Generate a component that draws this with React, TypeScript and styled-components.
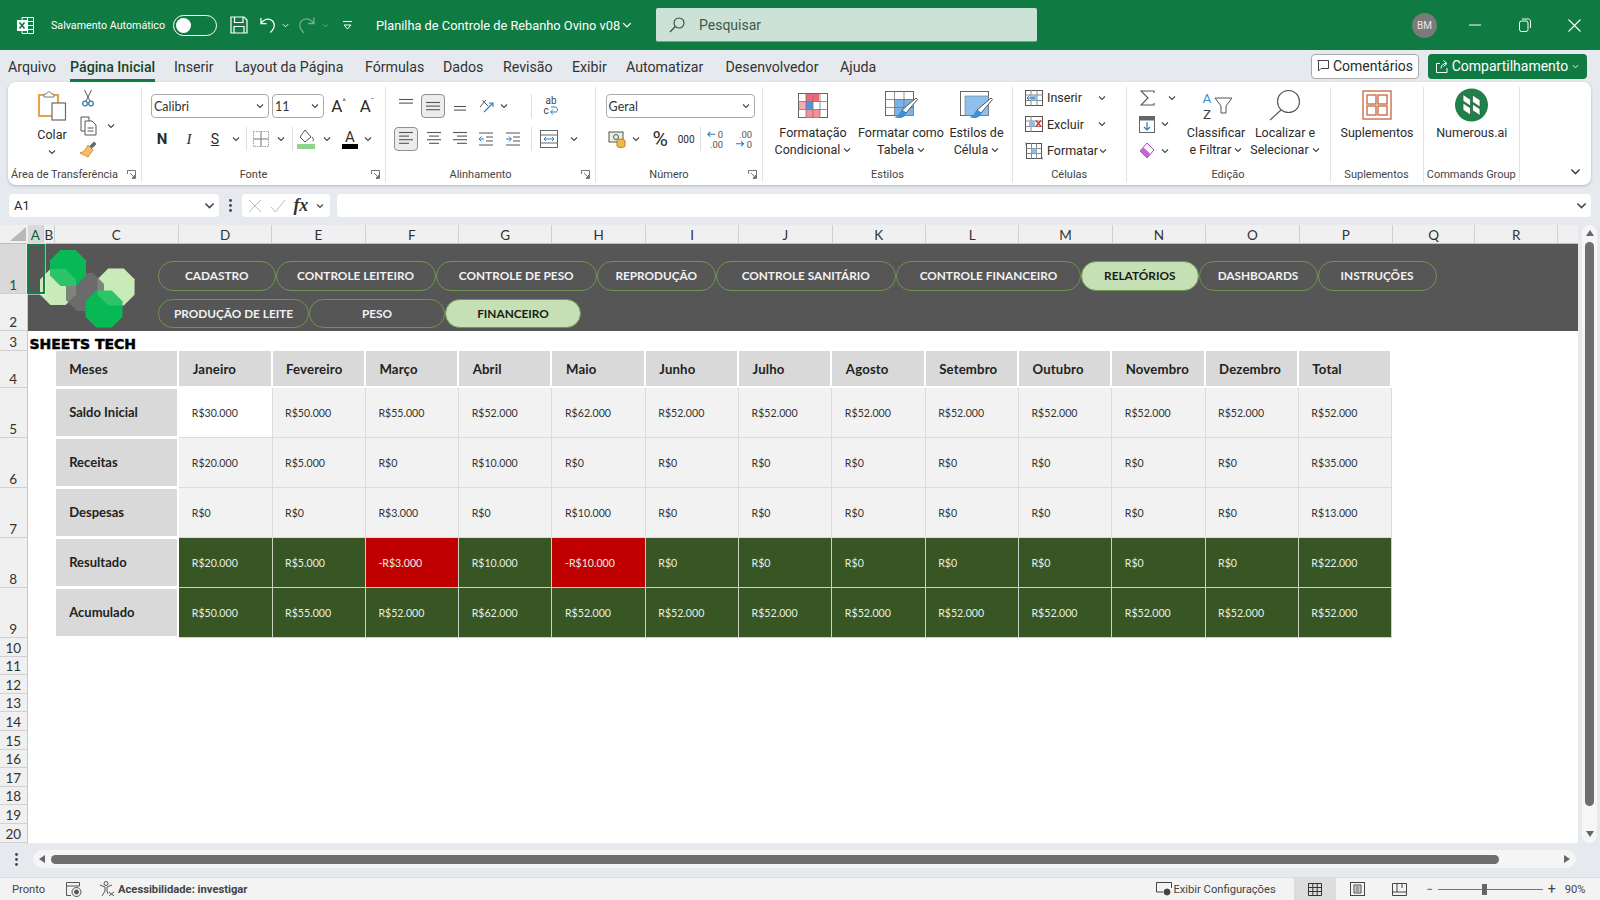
import React from 'react';
import styled, { createGlobalStyle } from 'styled-components';

const UI = `'Roboto', 'Liberation Sans', sans-serif`;
const CALIBRI = `'Lato', 'Liberation Sans', sans-serif`;

const Global = createGlobalStyle`
  html, body { margin: 0; padding: 0; background: #e6e9ed; overflow: hidden; }
  #root { width: 1600px; height: 900px; }
  * { box-sizing: border-box; }
`;

const Page = styled.div`
  width: 1600px;
  height: 900px;
  display: flex;
  flex-direction: column;
  background: #e6e9ed;
  font-family: ${UI};
  color: #2b2b2b;
  overflow: hidden;
`;

/* title bar */
const TitleBar = styled.div`
  height: 50px;
  flex: none;
  display: flex;
  align-items: center;
  background: #107a43;
  color: #fff;
`;

const Slot = styled.div<{ $w: number }>`
  width: ${(p) => p.$w}px;
  flex: none;
  display: flex;
  align-items: center;
  justify-content: center;
`;

const AutoSave = styled.div`
  width: 122px;
  flex: none;
  font-size: 10.7px;
  white-space: nowrap;
`;

const Toggle = styled.div`
  width: 44px;
  height: 21px;
  flex: none;
  border: 1.5px solid #fff;
  border-radius: 11px;
  display: flex;
  align-items: center;
  padding-left: 2px;
  &::before {
    content: '';
    width: 15px;
    height: 15px;
    border-radius: 50%;
    background: #fff;
  }
`;

const DocTitle = styled.div`
  margin-left: 14px;
  width: 240px;
  flex: none;
  font-size: 12.8px;
  white-space: nowrap;
`;

const SearchBox = styled.div`
  margin-left: 18px;
  width: 381px;
  height: 34px;
  flex: none;
  display: flex;
  align-items: center;
  gap: 14px;
  padding-left: 13px;
  background: #cde2d6;
  border-radius: 2px;
  border-bottom: 1px solid #7d9c8a;
  color: #3f5a4b;
  font-size: 14px;
`;

const Avatar = styled.div`
  margin-left: 375px;
  width: 25px;
  height: 25px;
  flex: none;
  border-radius: 50%;
  background: #7a7a7a;
  color: #e8e8e8;
  font-size: 10px;
  display: flex;
  align-items: center;
  justify-content: center;
`;

/* tabs */
const MenuRow = styled.div`
  height: 32px;
  flex: none;
  display: flex;
  align-items: center;
  padding-left: 8px;
`;

const Tab = styled.div<{ $w: number; $active?: boolean }>`
  width: ${(p) => p.$w}px;
  flex: none;
  height: 28px;
  margin-top: 3px;
  font-size: 14.2px;
  line-height: 26px;
  white-space: nowrap;
  position: relative;
  font-weight: ${(p) => (p.$active ? 500 : 400)};
  color: ${(p) => (p.$active ? '#14442a' : '#333')};
  &::after {
    content: '';
    display: ${(p) => (p.$active ? 'block' : 'none')};
    position: absolute;
    left: 0;
    width: 85px;
    bottom: 0;
    height: 2.5px;
    background: #107a43;
  }
`;

const CommentBtn = styled.div`
  margin-left: auto;
  width: 108px;
  height: 25px;
  flex: none;
  display: flex;
  align-items: center;
  justify-content: center;
  gap: 4px;
  background: #fff;
  border: 1px solid #a9a9a9;
  border-radius: 4px;
  font-size: 14px;
`;

const ShareBtn = styled.div`
  margin-left: 9px;
  margin-right: 13px;
  width: 159px;
  height: 25px;
  flex: none;
  display: flex;
  align-items: center;
  justify-content: center;
  gap: 4px;
  background: #107a43;
  border-radius: 4px;
  color: #fff;
  font-size: 14px;
`;

/* ribbon */
const Ribbon = styled.div`
  margin-left: 8px;
  width: 1583px;
  height: 103px;
  flex: none;
  display: flex;
  padding-top: 5px;
  background: #fff;
  border-radius: 8px;
  box-shadow: 0 1px 3px rgba(0, 0, 0, 0.22);
`;

const Group = styled.div<{ $w: number; $last?: boolean }>`
  width: ${(p) => p.$w}px;
  height: 95px;
  flex: none;
  display: flex;
  flex-direction: column;
  border-right: ${(p) => (p.$last ? 'none' : '1px solid #e2e2e2')};
`;

const GroupBody = styled.div<{ $pl?: number; $pt?: number; $row?: boolean }>`
  height: 80px;
  flex: none;
  display: flex;
  flex-direction: ${(p) => (p.$row ? 'row' : 'column')};
  padding-left: ${(p) => p.$pl ?? 0}px;
  padding-top: ${(p) => p.$pt ?? 0}px;
`;

const GroupLabel = styled.div`
  height: 15px;
  display: flex;
  align-items: center;
  font-size: 11px;
  color: #444;
`;

const LabelText = styled.div`
  flex: 1;
  text-align: center;
  white-space: nowrap;
`;

const Launcher = styled.div`
  width: 20px;
  flex: none;
  display: flex;
  justify-content: center;
`;

const ToolRow = styled.div<{ $h: number; $mt?: number }>`
  height: ${(p) => p.$h}px;
  margin-top: ${(p) => p.$mt ?? 0}px;
  flex: none;
  display: flex;
  align-items: center;
`;

const Tool = styled.div<{ $w: number; $fs?: number; $bold?: boolean; $italic?: boolean; $under?: boolean; $serif?: boolean }>`
  width: ${(p) => p.$w}px;
  flex: none;
  height: 24px;
  display: flex;
  align-items: center;
  justify-content: center;
  font-family: ${(p) => (p.$serif ? `'Liberation Serif', serif` : 'inherit')};
  font-size: ${(p) => p.$fs ?? 14}px;
  font-weight: ${(p) => (p.$bold ? 700 : 400)};
  font-style: ${(p) => (p.$italic ? 'italic' : 'normal')};
  text-decoration: ${(p) => (p.$under ? 'underline' : 'none')};
`;

const Caret = styled.span`
  font-size: 8px;
  align-self: flex-start;
  margin-top: 3px;
`;

const ToolSep = styled.div`
  width: 1px;
  height: 24px;
  flex: none;
  background: #dedede;
`;

const AlignBtn = styled.div<{ $active?: boolean; $ml?: number }>`
  width: 24px;
  height: 24px;
  flex: none;
  margin-left: ${(p) => p.$ml ?? 0}px;
  display: flex;
  align-items: center;
  justify-content: center;
  border-radius: 4px;
  background: ${(p) => (p.$active ? '#ececec' : 'transparent')};
  border: 1px solid ${(p) => (p.$active ? '#8f8f8f' : 'transparent')};
`;

const Select = styled.div<{ $w: number; $ml?: number }>`
  width: ${(p) => p.$w}px;
  height: 24px;
  flex: none;
  margin-left: ${(p) => p.$ml ?? 0}px;
  display: flex;
  align-items: center;
  justify-content: space-between;
  padding: 0 4px 0 2px;
  border: 1px solid #ababab;
  border-radius: 4px;
  font-family: ${CALIBRI};
  font-size: 12.5px;
  color: #333;
`;

const Column = styled.div<{ $w: number }>`
  width: ${(p) => p.$w}px;
  flex: none;
  display: flex;
  flex-direction: column;
`;

const PasteCol = styled.div`
  width: 44px;
  flex: none;
  display: flex;
  flex-direction: column;
  align-items: center;
  padding-top: 3px;
  font-size: 12.5px;
  line-height: 17px;
  gap: 5px;
`;

const BigTool = styled.div<{ $w: number }>`
  width: ${(p) => p.$w}px;
  flex: none;
  display: flex;
  flex-direction: column;
  align-items: center;
  font-size: 12.5px;
  line-height: 17px;
  text-align: center;
  white-space: nowrap;
`;

const BigIcon = styled.div`
  height: 36.5px;
  flex: none;
  display: flex;
  align-items: center;
`;

const CellText = styled.div<{ $w: number }>`
  width: ${(p) => p.$w}px;
  flex: none;
  font-size: 12.5px;
  white-space: nowrap;
`;

const Collapse = styled.div`
  flex: 1;
  display: flex;
  justify-content: flex-end;
  align-items: flex-end;
  padding: 0 10px 8px 0;
`;

/* formula bar */
const FormulaBar = styled.div`
  margin-top: 9px;
  height: 23px;
  flex: none;
  display: flex;
  align-items: center;
  padding-left: 9px;
`;

const NameBox = styled.div`
  width: 210px;
  height: 23px;
  flex: none;
  display: flex;
  align-items: center;
  justify-content: space-between;
  padding: 0 4px 0 5px;
  background: #fff;
  border-radius: 4px;
  font-size: 13px;
`;

const Dots = styled.div`
  width: 23px;
  flex: none;
  display: flex;
  justify-content: center;
`;

const FxBox = styled.div`
  width: 88px;
  height: 23px;
  flex: none;
  display: flex;
  align-items: center;
  justify-content: space-around;
  padding: 0 2px;
  background: #fff;
  border-radius: 4px;
`;

const FxText = styled.span`
  font-family: 'Liberation Serif', serif;
  font-style: italic;
  font-weight: 700;
  font-size: 18px;
  color: #333;
`;

const FormulaInput = styled.div`
  margin-left: 7px;
  width: 1254px;
  height: 23px;
  flex: none;
  display: flex;
  align-items: center;
  justify-content: flex-end;
  padding-right: 4px;
  background: #fff;
  border-radius: 4px;
`;

/* sheet */
const SheetArea = styled.div`
  margin-top: 8px;
  height: 618px;
  flex: none;
  display: flex;
`;

const Sheet = styled.div`
  width: 1578px;
  flex: none;
  display: flex;
  flex-direction: column;
  background: #fff;
`;

const ColHeaders = styled.div`
  height: 19px;
  flex: none;
  display: flex;
  background: #f0f0f0;
  border-bottom: 1px solid #bdbdbd;
`;

const Corner = styled.div`
  width: 27.5px;
  flex: none;
  display: flex;
  align-items: flex-end;
  justify-content: flex-end;
  padding: 0 2px 2px 0;
`;

const ColHeader = styled.div<{ $w: number; $selected?: boolean }>`
  width: ${(p) => p.$w}px;
  flex: none;
  display: flex;
  align-items: center;
  justify-content: center;
  padding-top: 2px;
  font-family: ${CALIBRI};
  font-size: 13.5px;
  color: ${(p) => (p.$selected ? '#0d5f33' : '#333')};
  background: ${(p) => (p.$selected ? '#d9d9d9' : 'transparent')};
  border-right: 1px solid #d0d0d0;
`;

const SheetBody = styled.div`
  flex: 1;
  display: flex;
  position: relative;
`;

const RowHeaders = styled.div`
  width: 27.5px;
  flex: none;
  display: flex;
  flex-direction: column;
  background: #f0f0f0;
  border-right: 1px solid #c8c8c8;
`;

const RowHeader = styled.div<{ $h: number; $selected?: boolean }>`
  height: ${(p) => p.$h}px;
  flex: none;
  display: flex;
  align-items: flex-end;
  justify-content: center;
  font-family: ${CALIBRI};
  font-size: 13.5px;
  line-height: 16px;
  color: ${(p) => (p.$selected ? '#0d5f33' : '#333')};
  background: ${(p) => (p.$selected ? '#d9d9d9' : 'transparent')};
  border-bottom: 1px solid #d0d0d0;
`;

const Canvas = styled.div`
  flex: 1;
  display: flex;
  flex-direction: column;
`;

const Band = styled.div`
  height: 87px;
  flex: none;
  display: flex;
  background: #565656;
  padding: 17px 0 0 130.5px;
  position: relative;
`;

const LogoMark = styled.svg`
  position: absolute;
  left: 10px;
  top: 1px;
`;

const PillRows = styled.div`
  display: flex;
  flex-direction: column;
  gap: 8px;
`;

const PillRow = styled.div`
  display: flex;
`;

const Pill = styled.div<{ $w: number; $active?: boolean }>`
  width: ${(p) => p.$w}px;
  height: 29.5px;
  flex: none;
  display: flex;
  align-items: center;
  justify-content: center;
  border-radius: 15px;
  border: 1px solid #6f9350;
  background: ${(p) => (p.$active ? '#c5e0b4' : 'transparent')};
  color: ${(p) => (p.$active ? '#1a1a1a' : '#f2f2f2')};
  font-family: ${CALIBRI};
  font-weight: 700;
  font-size: 11.8px;
  white-space: nowrap;
`;

const SheetTitle = styled.div`
  height: 20px;
  flex: none;
  padding-left: 2px;
  font-family: 'DejaVu Sans', sans-serif;
  font-weight: 700;
  font-size: 14px;
  line-height: 26px;
  color: #000;
  -webkit-text-stroke: 0.5px #000;
  white-space: nowrap;
`;

const Table = styled.div`
  margin-left: 28.2px;
  display: grid;
  grid-template-columns: 123.6px repeat(13, 93.3px);
  grid-template-rows: 36.7px repeat(5, 50px);
  width: max-content;
`;

const HeadCell = styled.div`
  display: flex;
  align-items: center;
  padding: 2px 0 0 13.5px;
  background: #d9d9d9;
  border: 1px solid #fff;
  border-width: 0 2px 2px 0;
  font-family: ${CALIBRI};
  font-weight: 700;
  font-size: 13.2px;
  letter-spacing: 0.15px;
  color: #222;
`;

const RowLabel = styled(HeadCell)`
  padding-top: 0;
  margin-top: 1px;
  font-size: 13px;
  letter-spacing: 0;
`;

type Tone = 'plain' | 'blank' | 'dark' | 'red';

const toneBg: Record<Tone, string> = {
  plain: '#f2f2f2',
  blank: '#ffffff',
  dark: '#375623',
  red: '#c00000',
};

const ValueCell = styled.div<{ $tone: Tone }>`
  display: flex;
  align-items: center;
  padding: 2px 0 0 12.5px;
  background: ${(p) => toneBg[p.$tone]};
  border-right: 1px solid ${(p) => (p.$tone === 'plain' || p.$tone === 'blank' ? '#dcdcdc' : '#c9d2c3')};
  border-bottom: 1px solid ${(p) => (p.$tone === 'plain' || p.$tone === 'blank' ? '#dcdcdc' : '#c9d2c3')};
  font-family: ${CALIBRI};
  font-size: 10.6px;
  color: ${(p) => (p.$tone === 'plain' || p.$tone === 'blank' ? '#333' : '#e9eee4')};
`;

const SelectionFrame = styled.div`
  position: absolute;
  left: 27px;
  top: 0;
  width: 18px;
  height: 50px;
  border: 2px solid #17804a;
  outline: 1px solid rgba(255, 255, 255, 0.5);
`;

const VScroll = styled.div`
  margin-left: 4px;
  width: 15px;
  height: 618px;
  flex: none;
  display: flex;
  flex-direction: column;
  align-items: center;
  background: #f6f6f6;
  border-radius: 8px;
  padding: 4px 0;
`;

const VThumb = styled.div`
  width: 9px;
  height: 566px;
  margin: 3px 0 23px;
  background: #6e6e6e;
  border-radius: 5px;
`;

/* scrollbar + status */
const HScrollRow = styled.div`
  margin-top: 7px;
  height: 18px;
  flex: none;
  display: flex;
  align-items: center;
`;

const SheetDots = styled.div`
  width: 33px;
  flex: none;
  display: flex;
  justify-content: center;
`;

const HTrack = styled.div`
  width: 1543px;
  height: 18px;
  flex: none;
  display: flex;
  align-items: center;
  padding-left: 5px;
  background: #f5f5f5;
  border-radius: 9px;
`;

const HThumb = styled.div`
  margin-left: 3px;
  width: 1448px;
  height: 9px;
  flex: none;
  background: #6e6e6e;
  border-radius: 5px;
`;

const ArrowGap = styled.div`
  margin-left: auto;
  padding-right: 3px;
  display: flex;
`;

const StatusBar = styled.div`
  margin-top: 9px;
  height: 23px;
  flex: none;
  display: flex;
  align-items: center;
  background: #f3f3f3;
  font-size: 11.2px;
  color: #444;
  border-top: 1px solid #dcdcdc;
`;

const StatusText = styled.div<{ $w?: number; $ml?: number; $bold?: boolean; $fs?: number }>`
  width: ${(p) => (p.$w ? `${p.$w}px` : 'auto')};
  margin-left: ${(p) => p.$ml ?? 0}px;
  flex: none;
  display: flex;
  font-size: ${(p) => p.$fs ?? 11.2}px;
  font-weight: ${(p) => (p.$bold ? 700 : 400)};
  white-space: nowrap;
`;

const ViewBtn = styled.div<{ $active?: boolean; $ml?: number }>`
  width: 42px;
  height: 22px;
  margin-left: ${(p) => p.$ml ?? 0}px;
  flex: none;
  display: flex;
  align-items: center;
  justify-content: center;
  background: ${(p) => (p.$active ? '#dcdcdc' : 'transparent')};
`;

const ZoomTrack = styled.div`
  margin-left: 5px;
  width: 105px;
  height: 1px;
  flex: none;
  position: relative;
  background: #777;
`;

const ZoomThumb = styled.div`
  position: absolute;
  left: 44px;
  top: -5px;
  width: 5px;
  height: 11px;
  background: #666;
`;

const NoShrinkSvg = styled.svg`
  flex: none;
`;

const MirroredSvg = styled.svg`
  transform: scaleX(-1);
`;

/* icons */
const Chev = ({ c = '#444', s = 8 }: { c?: string; s?: number }) => (
  <NoShrinkSvg width={s} height={s} viewBox="0 0 8 8">
    <path d="M1 2.5 4 5.5 7 2.5" fill="none" stroke={c} strokeWidth="1.1" />
  </NoShrinkSvg>
);

const Launch = () => (
  <svg width="9" height="9" viewBox="0 0 9 9">
    <path d="M.5 4V.5H8.5V8.5H5M3 3 7.5 7.5M7.5 5V7.5H5" fill="none" stroke="#666" strokeWidth=".9" />
  </svg>
);

const ExcelLogo = () => (
  <svg width="17" height="17" viewBox="0 0 17 17">
    <path d="M5 .5H16.5V16.5H5Z" fill="none" stroke="#fff" />
    <path d="M5 4.5H16.5M5 8.5H16.5M5 12.5H16.5M10.5.5V16.5" stroke="#fff" />
    <path d="M0 3H10V14H0Z" fill="#fff" />
    <path d="M2.5 5.5 7.5 11.5M7.5 5.5 2.5 11.5" stroke="#107a43" strokeWidth="1.6" />
  </svg>
);

const SaveIco = () => (
  <svg width="18" height="18" viewBox="0 0 18 18" fill="none" stroke="#fff" strokeWidth="1.2">
    <path d="M1 1H14L17 4V17H1Z" />
    <path d="M4.5 1V6.5H13V1M4 17V10.5H14V17" />
  </svg>
);

const UndoIco = () => (
  <svg width="17" height="18" viewBox="0 0 17 18" fill="none" stroke="#fff" strokeWidth="1.3">
    <path d="M1 1.5V7.5H7M1 7.5C4 3.5 8 2 11.5 3.5C16 6 17 11 11 17" />
  </svg>
);

const RedoIco = ({ c }: { c: string }) => (
  <MirroredSvg width="17" height="18" viewBox="0 0 17 18" fill="none" stroke={c} strokeWidth="1.3">
    <path d="M1 1.5V7.5H7M1 7.5C4 3.5 8 2 11.5 3.5C16 6 17 11 11 17" />
  </MirroredSvg>
);

const CustomizeIco = () => (
  <svg width="9" height="10" viewBox="0 0 9 10" fill="none" stroke="#fff">
    <path d="M0 1.5H9" />
    <path d="M1 5 4.5 9 8 5Z" />
  </svg>
);

const SearchIco = () => (
  <svg width="16" height="16" viewBox="0 0 16 16" fill="none" stroke="#2f4d3c" strokeWidth="1.1">
    <circle cx="10" cy="6" r="5" />
    <path d="M6.3 9.5 1 15" />
  </svg>
);

const MinIco = () => (
  <svg width="12" height="2" viewBox="0 0 12 2">
    <path d="M0 1H12" stroke="#fff" />
  </svg>
);

const RestoreIco = () => (
  <svg width="12" height="14" viewBox="0 0 12 14" fill="none" stroke="#fff">
    <rect x=".5" y="3" width="8.5" height="10.5" rx="2" />
    <path d="M3 1H9.5C10.5 1 11.5 2 11.5 3V10" />
  </svg>
);

const CloseIco = () => (
  <svg width="13" height="13" viewBox="0 0 13 13">
    <path d="M.5.5 12.5 12.5M12.5.5 .5 12.5" stroke="#fff" strokeWidth="1.1" />
  </svg>
);

const CommentIco = () => (
  <svg width="12" height="12" viewBox="0 0 12 12" fill="none" stroke="#444">
    <path d="M.5.5H11.5V8.5H4L1.5 11V.5" />
  </svg>
);

const ShareIco = () => (
  <svg width="12" height="13" viewBox="0 0 12 13" fill="none" stroke="#fff">
    <path d="M4 3.5H.5V12.5H11V8M5 8.5C5 5 7.5 3.5 10 3.5M7.5.5 11 3.5 7.5 6.5" />
  </svg>
);

const PasteIco = () => (
  <svg width="30" height="31" viewBox="0 0 30 31" fill="none">
    <path d="M7 5H2V26H21V5H16" stroke="#e2a653" strokeWidth="2.2" />
    <path d="M7 7V4H9.5C10 1 14 1 14.5 4H17V7Z" fill="#fff" stroke="#7a7a7a" />
    <rect x="15" y="13" width="13.5" height="17" fill="#fff" stroke="#6a6a6a" strokeWidth="1.2" />
  </svg>
);

const ScissorsIco = () => (
  <svg width="12" height="18" viewBox="0 0 12 18" fill="none" stroke="#555" strokeWidth="1">
    <path d="M2.5 1 8 12M9.5 1 4 12" />
    <circle cx="3" cy="14.5" r="2.3" stroke="#2f7fb0" strokeWidth="1.3" />
    <circle cx="9" cy="14.5" r="2.3" stroke="#2f7fb0" strokeWidth="1.3" />
  </svg>
);

const CopyIco = () => (
  <svg width="17" height="20" viewBox="0 0 17 20" fill="none" stroke="#555">
    <path d="M1 1H9V15H1Z" />
    <path d="M5 5H12L16 9V19H5Z" fill="#fff" />
    <path d="M7.5 12H13.5M7.5 15H13.5" />
  </svg>
);

const BrushIco = () => (
  <svg width="18" height="18" viewBox="0 0 18 18">
    <path d="M9 4 14 9 9 16 1 12C5 11 7 8 9 4Z" fill="#f4bd6b" stroke="#d8913a" />
    <path d="M10.5 5 15 .5 17.5 3 13 7.5Z" fill="#666" />
  </svg>
);

const BordersIco = () => (
  <svg width="16" height="16" viewBox="0 0 16 16" fill="none">
    <path d="M.5.5H15.5V15.5H.5Z" stroke="#9a9a9a" strokeDasharray="1.5 1" />
    <path d="M8 .5V15.5M.5 8H15.5" stroke="#777" />
  </svg>
);

const FillIco = () => (
  <svg width="18" height="20" viewBox="0 0 18 20">
    <path d="M8 1 14 8 8 13 3 8Z" fill="#fff" stroke="#555" />
    <path d="M15 8C16.5 10 17 11 15.5 12" stroke="#555" fill="none" />
    <rect x="0" y="15" width="18" height="5" fill="#8fd28f" />
  </svg>
);

const FontColorIco = () => (
  <svg width="18" height="22" viewBox="0 0 18 22">
    <text x="9" y="14" textAnchor="middle" fontFamily="Roboto, sans-serif" fontSize="15" fill="#333">A</text>
    <rect x="1" y="16" width="16" height="5" fill="#000" />
  </svg>
);

const Lines = ({ rows, top = 0 }: { rows: [number, number][]; top?: number }) => (
  <svg width="16" height="16" viewBox="0 0 16 16" stroke="#555" strokeWidth="1.1">
    {rows.map(([x1, x2], i) => (
      <path key={i} d={`M${x1} ${top + 1.5 + i * 3.6}H${x2}`} />
    ))}
  </svg>
);

const Indent = ({ flip }: { flip?: boolean }) => (
  <svg width="16" height="14" viewBox="0 0 16 14" fill="none">
    <path d="M1 1H15M8 5H15M8 9H15M1 13H15" stroke="#555" />
    <path d={flip ? 'M1 7H6M4 4.5 6.5 7 4 9.5' : 'M6 7H1M3.5 4.5 1 7 3.5 9.5'} stroke="#2f7cc0" />
  </svg>
);

const OrientIco = () => (
  <svg width="16" height="16" viewBox="0 0 16 16" fill="none">
    <path d="M2 9 8 2M4.5 2.5 10 8" stroke="#555" />
    <path d="M6 14 15 5M11 5H15V9" stroke="#2f7cc0" strokeWidth="1.1" />
  </svg>
);

const WrapIco = () => (
  <svg width="16" height="20" viewBox="0 0 16 20">
    <text x="8" y="8" textAnchor="middle" fontFamily="Roboto, sans-serif" fontSize="10" fill="#444">ab</text>
    <text x="3" y="18" textAnchor="middle" fontFamily="Roboto, sans-serif" fontSize="10" fill="#444">c</text>
    <path d="M8 16H13C15 16 15 11 12 11H8M10 13.5 7.5 16 10 18.5" fill="none" stroke="#2f7cc0" />
  </svg>
);

const MergeIco = () => (
  <svg width="18" height="18" viewBox="0 0 18 18" fill="none">
    <rect x=".5" y=".5" width="17" height="17" stroke="#666" />
    <path d="M.5 5H17.5M.5 13H17.5" stroke="#666" />
    <path d="M4 9H14M6 7 4 9 6 11M12 7 14 9 12 11" stroke="#2f7cc0" />
  </svg>
);

const CurrencyIco = () => (
  <svg width="18" height="18" viewBox="0 0 18 18">
    <rect x="1" y="2" width="14" height="10" fill="#e8f1e0" stroke="#555" />
    <circle cx="8" cy="7" r="2.5" fill="none" stroke="#555" />
    <ellipse cx="13" cy="11" rx="4" ry="2" fill="#f3b84a" stroke="#b87f1e" />
    <path d="M9 11V16C9 18 17 18 17 16V11" fill="#f3b84a" stroke="#b87f1e" />
  </svg>
);

const DecimalIco = ({ more }: { more?: boolean }) => (
  <svg width="18" height="21" viewBox="0 0 18 21">
    <text x="18" y="9" textAnchor="end" fontFamily="Roboto, sans-serif" fontSize="10" fill="#555">{more ? '.00' : '0'}</text>
    <text x="18" y="19" textAnchor="end" fontFamily="Roboto, sans-serif" fontSize="10" fill="#555">{more ? '0' : '.00'}</text>
    <path d={more ? 'M1 15H9M6.5 12.5 9 15 6.5 17.5' : 'M10 5H2M4.5 2.5 2 5 4.5 7.5'} fill="none" stroke="#2f7cc0" strokeWidth="1.2" />
  </svg>
);

const CondFormatIco = () => (
  <svg width="30" height="25" viewBox="0 0 30 25">
    <rect x=".5" y=".5" width="29" height="24" fill="#fff" stroke="#666" />
    <rect x="8" y="1" width="13" height="7.5" fill="#ee6a74" />
    <rect x="1" y="8.5" width="7" height="8" fill="#f7aab0" />
    <rect x="8" y="8.5" width="7" height="8" fill="#4f97dc" />
    <rect x="8" y="16.5" width="14" height="8" fill="#f58f98" />
    <path d="M8 0V25M15 0V25M22 0V25M0 8.5H30M0 16.5H30" stroke="#777" strokeWidth=".8" />
  </svg>
);

const TableBrushIco = () => (
  <svg width="33" height="28" viewBox="0 0 33 28">
    <rect x=".5" y=".5" width="28" height="24" fill="#fff" stroke="#666" />
    <rect x="9.5" y="8" width="19" height="16.5" fill="#7ab3e8" />
    <path d="M9.5 0V25M19 0V25M0 8.5H29M0 16.5H29" stroke="#777" strokeWidth=".8" />
    <path d="M31 7 32.5 8.5 21 22 17 19Z" fill="#fff" stroke="#555" />
    <path d="M17 19C14 21 15 25 9 26C14 28 21 27 21 22Z" fill="#3f8fd8" />
  </svg>
);

const StyleBrushIco = () => (
  <svg width="33" height="28" viewBox="0 0 33 28">
    <rect x=".5" y=".5" width="28" height="24" fill="#fff" stroke="#666" />
    <rect x="5" y="5" width="23.5" height="19.5" fill="#8ec0ee" stroke="#777" strokeWidth=".6" />
    <path d="M31 7 32.5 8.5 21 22 17 19Z" fill="#fff" stroke="#555" />
    <path d="M17 19C14 21 15 25 9 26C14 28 21 27 21 22Z" fill="#3f8fd8" />
  </svg>
);

const CellInsertIco = () => (
  <svg width="18" height="16" viewBox="0 0 18 16" fill="none">
    <rect x=".5" y=".5" width="17" height="15" stroke="#555" />
    <path d="M.5 5H17.5M.5 10.5H17.5M6 0V16M12 0V16" stroke="#888" />
    <rect x="6" y="5" width="6" height="5.5" fill="#8ec0ee" />
    <path d="M10 8H2M4.5 5.5 2 8 4.5 10.5" stroke="#2f7cc0" />
  </svg>
);

const CellDeleteIco = () => (
  <svg width="18" height="16" viewBox="0 0 18 16" fill="none">
    <rect x=".5" y=".5" width="17" height="15" stroke="#555" />
    <path d="M.5 5H17.5M.5 10.5H17.5M6 0V16" stroke="#888" />
    <rect x="4" y="5" width="6" height="5.5" fill="#8ec0ee" />
    <path d="M11 4.5 16 10.5M16 4.5 11 10.5" stroke="#d9342b" strokeWidth="1.4" />
  </svg>
);

const CellFormatIco = () => (
  <svg width="18" height="18" viewBox="0 0 18 18" fill="none">
    <rect x="1.5" y="1.5" width="15" height="15" stroke="#555" />
    <path d="M1.5 6.5H16.5M1.5 11.5H16.5M6.5 1V17M11.5 1V17" stroke="#888" />
    <rect x="6.5" y="6.5" width="5" height="5" fill="#8ec0ee" />
    <path d="M0 0V3M18 15V18" stroke="#2f7cc0" />
  </svg>
);

const SigmaIco = () => (
  <svg width="15" height="16" viewBox="0 0 15 16" fill="none" stroke="#555" strokeWidth="1.1">
    <path d="M14 3V1H1L8 8 1 15H14V13" />
  </svg>
);

const FillDownIco = () => (
  <svg width="16" height="17" viewBox="0 0 16 17" fill="none">
    <rect x=".5" y=".5" width="15" height="16" stroke="#666" />
    <rect x=".5" y=".5" width="15" height="4" fill="#666" />
    <path d="M8 6V14M5 11 8 14 11 11" stroke="#2f7cc0" strokeWidth="1.2" />
  </svg>
);

const EraserIco = () => (
  <svg width="16" height="17" viewBox="0 0 16 17">
    <path d="M8 1 15 8 8 16 1 9Z" fill="#fff" stroke="#a94ac0" />
    <path d="M4.5 5.5 1 9 8 16 11.5 12Z" fill="#c565d8" />
  </svg>
);

const SortIco = () => (
  <svg width="32" height="32" viewBox="0 0 32 32">
    <text x="7" y="13.5" textAnchor="middle" fontFamily="Roboto, sans-serif" fontSize="13.5" fill="#3f8fd8">A</text>
    <text x="7" y="29.5" textAnchor="middle" fontFamily="Roboto, sans-serif" fontSize="13.5" fill="#444">Z</text>
    <path d="M15 9H32L26 17V24H21V17Z" fill="none" stroke="#555" />
  </svg>
);

const FindIco = () => (
  <svg width="32" height="32" viewBox="0 0 32 32" fill="none" stroke="#555" strokeWidth="1.1">
    <circle cx="19.5" cy="12.5" r="11" />
    <path d="M12 21 1 31" />
  </svg>
);

const AddinIco = () => (
  <svg width="30" height="30" viewBox="0 0 30 30" fill="none" stroke="#c8704d" strokeWidth="1.4">
    <rect x="1" y="1" width="28" height="28" />
    <rect x="5" y="5" width="9" height="9" />
    <rect x="16" y="5" width="9" height="9" />
    <rect x="5" y="16" width="9" height="9" />
    <rect x="16" y="16" width="9" height="9" />
  </svg>
);

const NumerousIco = () => (
  <svg width="33" height="34" viewBox="0 0 33 34">
    <circle cx="16.5" cy="17" r="16.5" fill="#1f8049" />
    <path d="M8 6.5 15.5 11.5V18L8 13ZM8 15 15.5 20V27L8 22ZM17.5 7 25 12V19L17.5 14ZM17.5 16 25 21V27.5L17.5 22.5Z" fill="#fff" stroke="#1f5c38" strokeWidth=".7" />
  </svg>
);

const DotsIco = () => (
  <svg width="3" height="13" viewBox="0 0 3 13" fill="#444">
    <circle cx="1.5" cy="1.5" r="1.4" />
    <circle cx="1.5" cy="6.5" r="1.4" />
    <circle cx="1.5" cy="11.5" r="1.4" />
  </svg>
);

const Tri = ({ dir }: { dir: 'left' | 'right' | 'up' | 'down' }) => {
  const d = {
    left: 'M7 1V9L1 5Z',
    right: 'M1 1V9L7 5Z',
    up: 'M1 7H9L5 1Z',
    down: 'M1 2H9L5 8Z',
  }[dir];
  return (
    <NoShrinkSvg width="10" height="10" viewBox="0 0 10 10" fill="#666">
      <path d={d} />
    </NoShrinkSvg>
  );
};

const CloseIcoGrey = () => (
  <svg width="14" height="14" viewBox="0 0 14 14">
    <path d="M1 1 13 13M13 1 1 13" stroke="#bdbdbd" />
  </svg>
);

const CheckIcoGrey = () => (
  <svg width="16" height="14" viewBox="0 0 16 14" fill="none">
    <path d="M1 8 5.5 13 15 1" stroke="#bdbdbd" />
  </svg>
);

const MacroIco = () => (
  <svg width="16" height="15" viewBox="0 0 16 15" fill="none" stroke="#555">
    <path d="M.5.5H13.5V4H.5ZM.5 4V13.5H5" />
    <circle cx="10.5" cy="10" r="4.5" />
    <circle cx="10.5" cy="10" r="2" fill="#555" />
  </svg>
);

const AccessIco = () => (
  <svg width="16" height="16" viewBox="0 0 16 16" fill="none" stroke="#555">
    <circle cx="7" cy="2.5" r="2" />
    <path d="M1 4 6 6V10L3 15M13 4 8 6V10L9 13M10 11 15 15M15 11 10 15" />
  </svg>
);

const DisplayIco = () => (
  <svg width="16" height="14" viewBox="0 0 16 14" fill="none" stroke="#444">
    <path d="M7 10H.5V.5H15.5V6" />
    <circle cx="11" cy="10" r="3" fill="#444" />
  </svg>
);

const GridViewIco = () => (
  <svg width="14" height="13" viewBox="0 0 14 13" fill="none" stroke="#333">
    <path d="M.5.5H13.5V12.5H.5ZM.5 4.5H13.5M.5 8.5H13.5M4.8.5V12.5M9.2.5V12.5" />
  </svg>
);

const PageViewIco = () => (
  <svg width="15" height="14" viewBox="0 0 15 14" fill="none" stroke="#444">
    <rect x=".5" y=".5" width="14" height="13" />
    <path d="M4 3H11V11H4ZM5.5 5H9.5M5.5 7H9.5M5.5 9H9.5" />
  </svg>
);

const BreakViewIco = () => (
  <svg width="15" height="13" viewBox="0 0 15 13" fill="none" stroke="#444">
    <path d="M.5 12.5V.5H14.5V12.5ZM.5 9H14.5M5 .5V9M10 .5V5" />
  </svg>
);

const octagon = (cx: number, cy: number, r: number) => {
  const k = r * 0.42;
  return `${cx - k},${cy - r} ${cx + k},${cy - r} ${cx + r},${cy - k} ${cx + r},${cy + k} ${cx + k},${cy + r} ${cx - k},${cy + r} ${cx - r},${cy + k} ${cx - r},${cy - k}`;
};

const Logo = () => (
  <LogoMark width="100" height="86" viewBox="0 0 100 86">
    <polygon points={octagon(20, 42, 18)} fill="#c9ecb8" />
    <polygon points={octagon(78, 42, 18.5)} fill="#c9ecb8" />
    <polygon points={octagon(47, 47, 19)} fill="#6b6b6b" />
    <polygon points={octagon(30, 23, 18)} fill="#07b955" />
    <polygon points={octagon(66, 64, 18.5)} fill="#07b955" />
    <polygon points={octagon(20, 42, 18)} fill="#c9ecb8" opacity="0.2" />
    <polygon points={octagon(78, 42, 18.5)} fill="#c9ecb8" opacity="0.2" />
  </LogoMark>
);

/* data */
const cols = ['D', 'E', 'F', 'G', 'H', 'I', 'J', 'K', 'L', 'M', 'N', 'O', 'P'];
const rowHeights = [50, 37, 20, 36.7, 50.3, 50, 50, 50, 50, ...Array(11).fill(18.6)];
const months = ['Janeiro', 'Fevereiro', 'Março', 'Abril', 'Maio', 'Junho', 'Julho', 'Agosto', 'Setembro', 'Outubro', 'Novembro', 'Dezembro', 'Total'];

const pillsTop: [string, number, boolean?][] = [
  ['CADASTRO', 117.5],
  ['CONTROLE LEITEIRO', 160],
  ['CONTROLE DE PESO', 161.5],
  ['REPRODUÇÃO', 118.5],
  ['CONTROLE SANITÁRIO', 180.5],
  ['CONTROLE FINANCEIRO', 185],
  ['RELATÓRIOS', 117.5, true],
  ['DASHBOARDS', 119],
  ['INSTRUÇÕES', 119],
];

const pillsBottom: [string, number, boolean?][] = [
  ['PRODUÇÃO DE LEITE', 151],
  ['PESO', 136],
  ['FINANCEIRO', 136, true],
];

const zeros = (total: string) => ['R$0', 'R$0', 'R$0', 'R$0', 'R$0', 'R$0', 'R$0', 'R$0', total];

const tableRows: { label: string; tone: Tone; values: string[] }[] = [
  { label: 'Saldo Inicial', tone: 'plain', values: ['R$30.000', 'R$50.000', 'R$55.000', 'R$52.000', 'R$62.000', 'R$52.000', 'R$52.000', 'R$52.000', 'R$52.000', 'R$52.000', 'R$52.000', 'R$52.000', 'R$52.000'] },
  { label: 'Receitas', tone: 'plain', values: ['R$20.000', 'R$5.000', 'R$0', 'R$10.000', ...zeros('R$35.000')] },
  { label: 'Despesas', tone: 'plain', values: ['R$0', 'R$0', 'R$3.000', 'R$0', 'R$10.000', 'R$0', 'R$0', 'R$0', 'R$0', 'R$0', 'R$0', 'R$0', 'R$13.000'] },
  { label: 'Resultado', tone: 'dark', values: ['R$20.000', 'R$5.000', '-R$3.000', 'R$10.000', '-R$10.000', 'R$0', 'R$0', 'R$0', 'R$0', 'R$0', 'R$0', 'R$0', 'R$22.000'] },
  { label: 'Acumulado', tone: 'dark', values: ['R$50.000', 'R$55.000', 'R$52.000', 'R$62.000', 'R$52.000', 'R$52.000', 'R$52.000', 'R$52.000', 'R$52.000', 'R$52.000', 'R$52.000', 'R$52.000', 'R$52.000'] },
];

const cellTone = (base: Tone, value: string, isFirstCell: boolean): Tone => {
  if (value.startsWith('-')) return 'red';
  if (isFirstCell) return 'blank';
  return base;
};

const GroupTitle = ({ text, launcher }: { text: string; launcher?: boolean }) => (
  <GroupLabel>
    <LabelText>{text}</LabelText>
    {launcher && (
      <Launcher>
        <Launch />
      </Launcher>
    )}
  </GroupLabel>
);

export default function App() {
  return (
    <Page>
      <Global />
      <TitleBar>
        <Slot $w={51}>
          <ExcelLogo />
        </Slot>
        <AutoSave>Salvamento Automático</AutoSave>
        <Toggle />
        <Slot $w={43}>
          <SaveIco />
        </Slot>
        <Slot $w={16}>
          <UndoIco />
        </Slot>
        <Slot $w={18}>
          <Chev c="#fff" s={7} />
        </Slot>
        <Slot $w={24}>
          <RedoIco c="#6fb18d" />
        </Slot>
        <Slot $w={14}>
          <Chev c="#6fb18d" s={7} />
        </Slot>
        <Slot $w={30}>
          <CustomizeIco />
        </Slot>
        <DocTitle>Planilha de Controle de Rebanho Ovino v08</DocTitle>
        <Slot $w={22}>
          <Chev c="#fff" s={10} />
        </Slot>
        <SearchBox>
          <SearchIco />
          Pesquisar
        </SearchBox>
        <Avatar>BM</Avatar>
        <Slot $w={75}>
          <MinIco />
        </Slot>
        <Slot $w={25}>
          <RestoreIco />
        </Slot>
        <Slot $w={75}>
          <CloseIco />
        </Slot>
      </TitleBar>

      <MenuRow>
        <Tab $w={62}>Arquivo</Tab>
        <Tab $w={104} $active>Página Inicial</Tab>
        <Tab $w={60.7}>Inserir</Tab>
        <Tab $w={130.3}>Layout da Página</Tab>
        <Tab $w={78}>Fórmulas</Tab>
        <Tab $w={60}>Dados</Tab>
        <Tab $w={69}>Revisão</Tab>
        <Tab $w={54}>Exibir</Tab>
        <Tab $w={99.5}>Automatizar</Tab>
        <Tab $w={114.5}>Desenvolvedor</Tab>
        <Tab $w={40}>Ajuda</Tab>
        <CommentBtn>
          <CommentIco />
          Comentários
        </CommentBtn>
        <ShareBtn>
          <ShareIco />
          Compartilhamento
          <Chev c="#fff" s={7} />
        </ShareBtn>
      </MenuRow>

      <Ribbon>
        <Group $w={134}>
          <GroupBody $row $pl={22}>
            <PasteCol>
              <PasteIco />
              Colar
              <Chev />
            </PasteCol>
            <Column $w={60}>
              <ToolRow $h={22}>
                <Tool $w={28}><ScissorsIco /></Tool>
              </ToolRow>
              <ToolRow $h={34}>
                <Tool $w={28}><CopyIco /></Tool>
                <Tool $w={18}><Chev /></Tool>
              </ToolRow>
              <ToolRow $h={14}>
                <Tool $w={28}><BrushIco /></Tool>
              </ToolRow>
            </Column>
          </GroupBody>
          <GroupTitle text="Área de Transferência" launcher />
        </Group>

        <Group $w={244}>
          <GroupBody $pl={9} $pt={7}>
            <ToolRow $h={24}>
              <Select $w={118}>Calibri<Chev /></Select>
              <Select $w={52} $ml={3}>11<Chev /></Select>
              <Tool $w={29} $fs={17}>A<Caret>^</Caret></Tool>
              <Tool $w={28} $fs={17}>A<Caret>ˇ</Caret></Tool>
            </ToolRow>
            <ToolRow $h={24} $mt={9}>
              <Tool $w={22} $bold $fs={15}>N</Tool>
              <Tool $w={32} $italic $serif $fs={15}>I</Tool>
              <Tool $w={20} $under>S</Tool>
              <Tool $w={21}><Chev /></Tool>
              <ToolSep />
              <Tool $w={27}><BordersIco /></Tool>
              <Tool $w={14}><Chev /></Tool>
              <Tool $w={8}><ToolSep /></Tool>
              <Tool $w={20}><FillIco /></Tool>
              <Tool $w={21}><Chev /></Tool>
              <Tool $w={25}><FontColorIco /></Tool>
              <Tool $w={12}><Chev /></Tool>
            </ToolRow>
          </GroupBody>
          <GroupTitle text="Fonte" launcher />
        </Group>

        <Group $w={210}>
          <GroupBody $pl={8} $pt={7}>
            <ToolRow $h={24}>
              <AlignBtn><Lines rows={[[1, 15], [1, 15]]} /></AlignBtn>
              <AlignBtn $active $ml={3}><Lines rows={[[1, 15], [1, 15], [1, 15]]} top={3} /></AlignBtn>
              <Tool $w={30}><Lines rows={[[2, 14], [2, 14]]} top={7} /></Tool>
              <Tool $w={22}><OrientIco /></Tool>
              <Tool $w={14}><Chev /></Tool>
              <Tool $w={20} />
              <ToolSep />
              <Tool $w={38}><WrapIco /></Tool>
            </ToolRow>
            <ToolRow $h={24} $mt={9}>
              <AlignBtn $active><Lines rows={[[1, 15], [1, 11], [1, 15], [1, 11]]} /></AlignBtn>
              <Tool $w={32}><Lines rows={[[1, 15], [3, 13], [1, 15], [3, 13]]} /></Tool>
              <Tool $w={20}><Lines rows={[[1, 15], [5, 15], [1, 15], [5, 15]]} /></Tool>
              <Tool $w={32}><Indent /></Tool>
              <Tool $w={22}><Indent flip /></Tool>
              <Tool $w={7} />
              <ToolSep />
              <Tool $w={34}><MergeIco /></Tool>
              <Tool $w={16}><Chev /></Tool>
            </ToolRow>
          </GroupBody>
          <GroupTitle text="Alinhamento" launcher />
        </Group>

        <Group $w={167}>
          <GroupBody $pl={9.6} $pt={7}>
            <ToolRow $h={24}>
              <Select $w={149}>Geral<Chev /></Select>
            </ToolRow>
            <ToolRow $h={24} $mt={9}>
              <Tool $w={23}><CurrencyIco /></Tool>
              <Tool $w={15}><Chev /></Tool>
              <Tool $w={33} $fs={21}>%</Tool>
              <Tool $w={19} $fs={10}>000</Tool>
              <Tool $w={10}><ToolSep /></Tool>
              <Tool $w={17}><DecimalIco /></Tool>
              <Tool $w={12} />
              <Tool $w={17}><DecimalIco more /></Tool>
            </ToolRow>
          </GroupBody>
          <GroupTitle text="Número" launcher />
        </Group>

        <Group $w={250}>
          <GroupBody $row>
            <BigTool $w={100}>
              <BigIcon><CondFormatIco /></BigIcon>
              Formatação
              <span>Condicional <Chev /></span>
            </BigTool>
            <BigTool $w={76}>
              <BigIcon><TableBrushIco /></BigIcon>
              Formatar como
              <span>Tabela <Chev /></span>
            </BigTool>
            <BigTool $w={75}>
              <BigIcon><StyleBrushIco /></BigIcon>
              Estilos de
              <span>Célula <Chev /></span>
            </BigTool>
          </GroupBody>
          <GroupTitle text="Estilos" />
        </Group>

        <Group $w={113.5}>
          <GroupBody $pl={12}>
            <ToolRow $h={21}>
              <Tool $w={18}><CellInsertIco /></Tool>
              <Tool $w={4} />
              <CellText $w={48}>Inserir</CellText>
              <Tool $w={14}><Chev /></Tool>
            </ToolRow>
            <ToolRow $h={32}>
              <Tool $w={18}><CellDeleteIco /></Tool>
              <Tool $w={4} />
              <CellText $w={48}>Excluir</CellText>
              <Tool $w={14}><Chev /></Tool>
            </ToolRow>
            <ToolRow $h={21}>
              <Tool $w={18}><CellFormatIco /></Tool>
              <Tool $w={4} />
              <CellText $w={49}>Formatar</CellText>
              <Tool $w={14}><Chev /></Tool>
            </ToolRow>
          </GroupBody>
          <GroupTitle text="Células" />
        </Group>

        <Group $w={204}>
          <GroupBody $row $pl={10}>
            <Column $w={50}>
              <ToolRow $h={21}>
                <Tool $w={21}><SigmaIco /></Tool>
                <Tool $w={29}><Chev /></Tool>
              </ToolRow>
              <ToolRow $h={32}>
                <Tool $w={21}><FillDownIco /></Tool>
                <Tool $w={15}><Chev /></Tool>
              </ToolRow>
              <ToolRow $h={21}>
                <Tool $w={21}><EraserIco /></Tool>
                <Tool $w={15}><Chev /></Tool>
              </ToolRow>
            </Column>
            <BigTool $w={59}>
              <BigIcon><SortIco /></BigIcon>
              Classificar
              <span>e Filtrar <Chev /></span>
            </BigTool>
            <BigTool $w={79}>
              <BigIcon><FindIco /></BigIcon>
              Localizar e
              <span>Selecionar <Chev /></span>
            </BigTool>
          </GroupBody>
          <GroupTitle text="Edição" />
        </Group>

        <Group $w={93}>
          <GroupBody $row>
            <BigTool $w={93}>
              <BigIcon><AddinIco /></BigIcon>
              Suplementos
            </BigTool>
          </GroupBody>
          <GroupTitle text="Suplementos" />
        </Group>

        <Group $w={96.5}>
          <GroupBody $row>
            <BigTool $w={96.5}>
              <BigIcon><NumerousIco /></BigIcon>
              Numerous.ai
            </BigTool>
          </GroupBody>
          <GroupTitle text="Commands Group" />
        </Group>

        <Collapse>
          <Chev s={11} />
        </Collapse>
      </Ribbon>

      <FormulaBar>
        <NameBox>A1<Chev s={11} /></NameBox>
        <Dots><DotsIco /></Dots>
        <FxBox>
          <CloseIcoGrey />
          <CheckIcoGrey />
          <FxText>fx</FxText>
          <Chev />
        </FxBox>
        <FormulaInput><Chev s={11} /></FormulaInput>
      </FormulaBar>

      <SheetArea>
        <Sheet>
          <ColHeaders>
            <Corner>
              <svg width="20" height="14" viewBox="0 0 20 14">
                <path d="M20 0V14H4Z" fill="#b8b8b8" />
              </svg>
            </Corner>
            <ColHeader $w={16.5} $selected>A</ColHeader>
            <ColHeader $w={10.7}>B</ColHeader>
            <ColHeader $w={124.2}>C</ColHeader>
            {cols.map((c) => (
              <ColHeader key={c} $w={93.4}>{c}</ColHeader>
            ))}
            <ColHeader $w={82.5}>Q</ColHeader>
            <ColHeader $w={82.5}>R</ColHeader>
          </ColHeaders>
          <SheetBody>
            <RowHeaders>
              {rowHeights.map((h, i) => (
                <RowHeader key={i} $h={h} $selected={i === 0}>{i + 1}</RowHeader>
              ))}
            </RowHeaders>
            <Canvas>
              <Band>
                <Logo />
                <PillRows>
                  <PillRow>
                    {pillsTop.map(([t, w, a]) => (
                      <Pill key={t} $w={w} $active={a}>{t}</Pill>
                    ))}
                  </PillRow>
                  <PillRow>
                    {pillsBottom.map(([t, w, a]) => (
                      <Pill key={t} $w={w} $active={a}>{t}</Pill>
                    ))}
                  </PillRow>
                </PillRows>
              </Band>
              <SheetTitle>SHEETS TECH</SheetTitle>
              <Table>
                <HeadCell>Meses</HeadCell>
                {months.map((m) => (
                  <HeadCell key={m}>{m}</HeadCell>
                ))}
                {tableRows.map((row, r) => (
                  <React.Fragment key={row.label}>
                    <RowLabel>{row.label}</RowLabel>
                    {row.values.map((v, c) => (
                      <ValueCell key={c} $tone={cellTone(row.tone, v, r === 0 && c === 0)}>{v}</ValueCell>
                    ))}
                  </React.Fragment>
                ))}
              </Table>
            </Canvas>
            <SelectionFrame />
          </SheetBody>
        </Sheet>
        <VScroll>
          <Tri dir="up" />
          <VThumb />
          <Tri dir="down" />
        </VScroll>
      </SheetArea>

      <HScrollRow>
        <SheetDots><DotsIco /></SheetDots>
        <HTrack>
          <Tri dir="left" />
          <HThumb />
          <ArrowGap><Tri dir="right" /></ArrowGap>
        </HTrack>
      </HScrollRow>

      <StatusBar>
        <StatusText $w={54} $ml={12}>Pronto</StatusText>
        <Slot $w={16}><MacroIco /></Slot>
        <Slot $w={17} />
        <Slot $w={16}><AccessIco /></Slot>
        <StatusText $bold $ml={3}>Acessibilidade: investigar</StatusText>
        <StatusText $ml={909}><DisplayIco /></StatusText>
        <StatusText $w={121} $ml={1}>Exibir Configurações</StatusText>
        <ViewBtn $active><GridViewIco /></ViewBtn>
        <ViewBtn><PageViewIco /></ViewBtn>
        <ViewBtn><BreakViewIco /></ViewBtn>
        <StatusText $ml={6}>−</StatusText>
        <ZoomTrack><ZoomThumb /></ZoomTrack>
        <StatusText $ml={5} $fs={14}>+</StatusText>
        <StatusText $ml={9}>90%</StatusText>
      </StatusBar>
    </Page>
  );
}
